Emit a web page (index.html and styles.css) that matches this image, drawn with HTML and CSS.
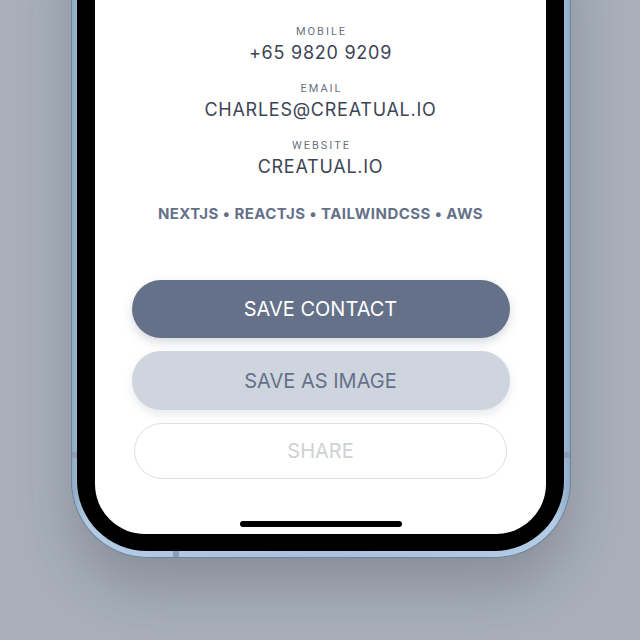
FILE: index.html
```html
<!DOCTYPE html>
<html>
<head>
<meta charset="utf-8">
<link rel="stylesheet" href="styles.css">
</head>
<body>
<div class="stage">
  <div class="phone">
    <span class="notch notch-left"></span>
    <span class="notch notch-right"></span>
    <span class="notch notch-bottom"></span>
    <div class="bezel">
      <div class="screen">
        <div class="info">
          <div class="field">
            <div class="label">MOBILE</div>
            <div class="value">+65 9820 9209</div>
          </div>
          <div class="field">
            <div class="label">EMAIL</div>
            <div class="value">CHARLES@CREATUAL.IO</div>
          </div>
          <div class="field">
            <div class="label">WEBSITE</div>
            <div class="value">CREATUAL.IO</div>
          </div>
        </div>
        <div class="skills">NEXTJS • REACTJS • TAILWINDCSS • AWS</div>
        <div class="actions">
          <button class="btn btn-primary">SAVE CONTACT</button>
          <button class="btn btn-secondary">SAVE AS IMAGE</button>
          <button class="btn btn-outline">SHARE</button>
        </div>
        <div class="home-indicator"></div>
      </div>
    </div>
  </div>
</div>
</body>
</html>
```
FILE: styles.css
```css
html, body {
  margin: 0;
  padding: 0;
}
body {
  width: 640px;
  height: 640px;
  overflow: hidden;
  background: #a8afb8;
  font-family: "Inter", "Liberation Sans", sans-serif;
}
.stage {
  width: 640px;
  height: 640px;
  overflow: hidden;
}
.phone {
  position: relative;
  width: 498px;
  box-sizing: border-box;
  margin: -60px 0 0 72px;
  padding: 0 6px 6px 5px;
  background: linear-gradient(90deg, #8fa9c6 0%, #b3cbe4 3%, #a9c2dd 50%, #b3cbe4 97%, #8fa9c6 100%);
  border-radius: 0 0 76px 76px;
  box-shadow: 0 0 0 1px #6d84a1, 0 30px 50px rgba(60, 66, 76, 0.28);
}
.notch {
  position: absolute;
  background: #8d9cb8;
}
.notch-left { left: 0; top: 512px; width: 5px; height: 6px; }
.notch-right { right: 0; top: 512px; width: 6px; height: 6px; }
.notch-bottom { left: 101px; bottom: 0; width: 6px; height: 6px; }
.bezel {
  background: #000;
  padding: 0 18px 17px 18px;
  border-radius: 0 0 70px 70px;
}
.screen {
  position: relative;
  background: #fff;
  height: 594px;
  border-radius: 0 0 50px 50px;
  display: flex;
  flex-direction: column;
  align-items: center;
  padding-top: 85px;
  box-sizing: border-box;
}
.info {
  display: flex;
  flex-direction: column;
  align-items: center;
  gap: 18px;
}
.field {
  display: flex;
  flex-direction: column;
  align-items: center;
}
.label {
  font-family: "Roboto", "Liberation Sans", sans-serif;
  font-size: 11px;
  line-height: 14px;
  letter-spacing: 2px;
  color: #6b7180;
  margin-right: -2px;
}
.value {
  font-size: 18px;
  line-height: 22px;
  letter-spacing: 0.75px;
  color: #3d4454;
  margin-top: 3px;
}
.skills {
  margin-top: 26px;
  font-size: 15px;
  font-weight: 700;
  color: #657189;
  letter-spacing: 0.45px;
  line-height: 20px;
}
.actions {
  margin-top: 56px;
  width: 378px;
  display: flex;
  flex-direction: column;
  align-items: center;
  gap: 13px;
}
.btn {
  font-family: "Inter", "Liberation Sans", sans-serif;
  font-size: 20px;
  font-weight: 400;
  width: 378px;
  height: 58px;
  border-radius: 29px;
  border: none;
  padding: 0;
  letter-spacing: 0;
}
.btn-primary {
  background: #647189;
  color: #fff;
  box-shadow: 0 4px 10px rgba(90, 100, 120, 0.25);
}
.btn-secondary {
  background: #ced5df;
  color: #667189;
  height: 59px;
  box-shadow: 0 4px 10px rgba(90, 100, 120, 0.15);
}
.btn-outline {
  width: 373px;
  height: 56px;
  background: #fff;
  color: #cfd1d6;
  border: 1.5px solid #dcdde0;
}
.home-indicator {
  position: absolute;
  left: 145px;
  bottom: 7px;
  width: 162px;
  height: 6px;
  border-radius: 3px;
  background: #000;
}
```
